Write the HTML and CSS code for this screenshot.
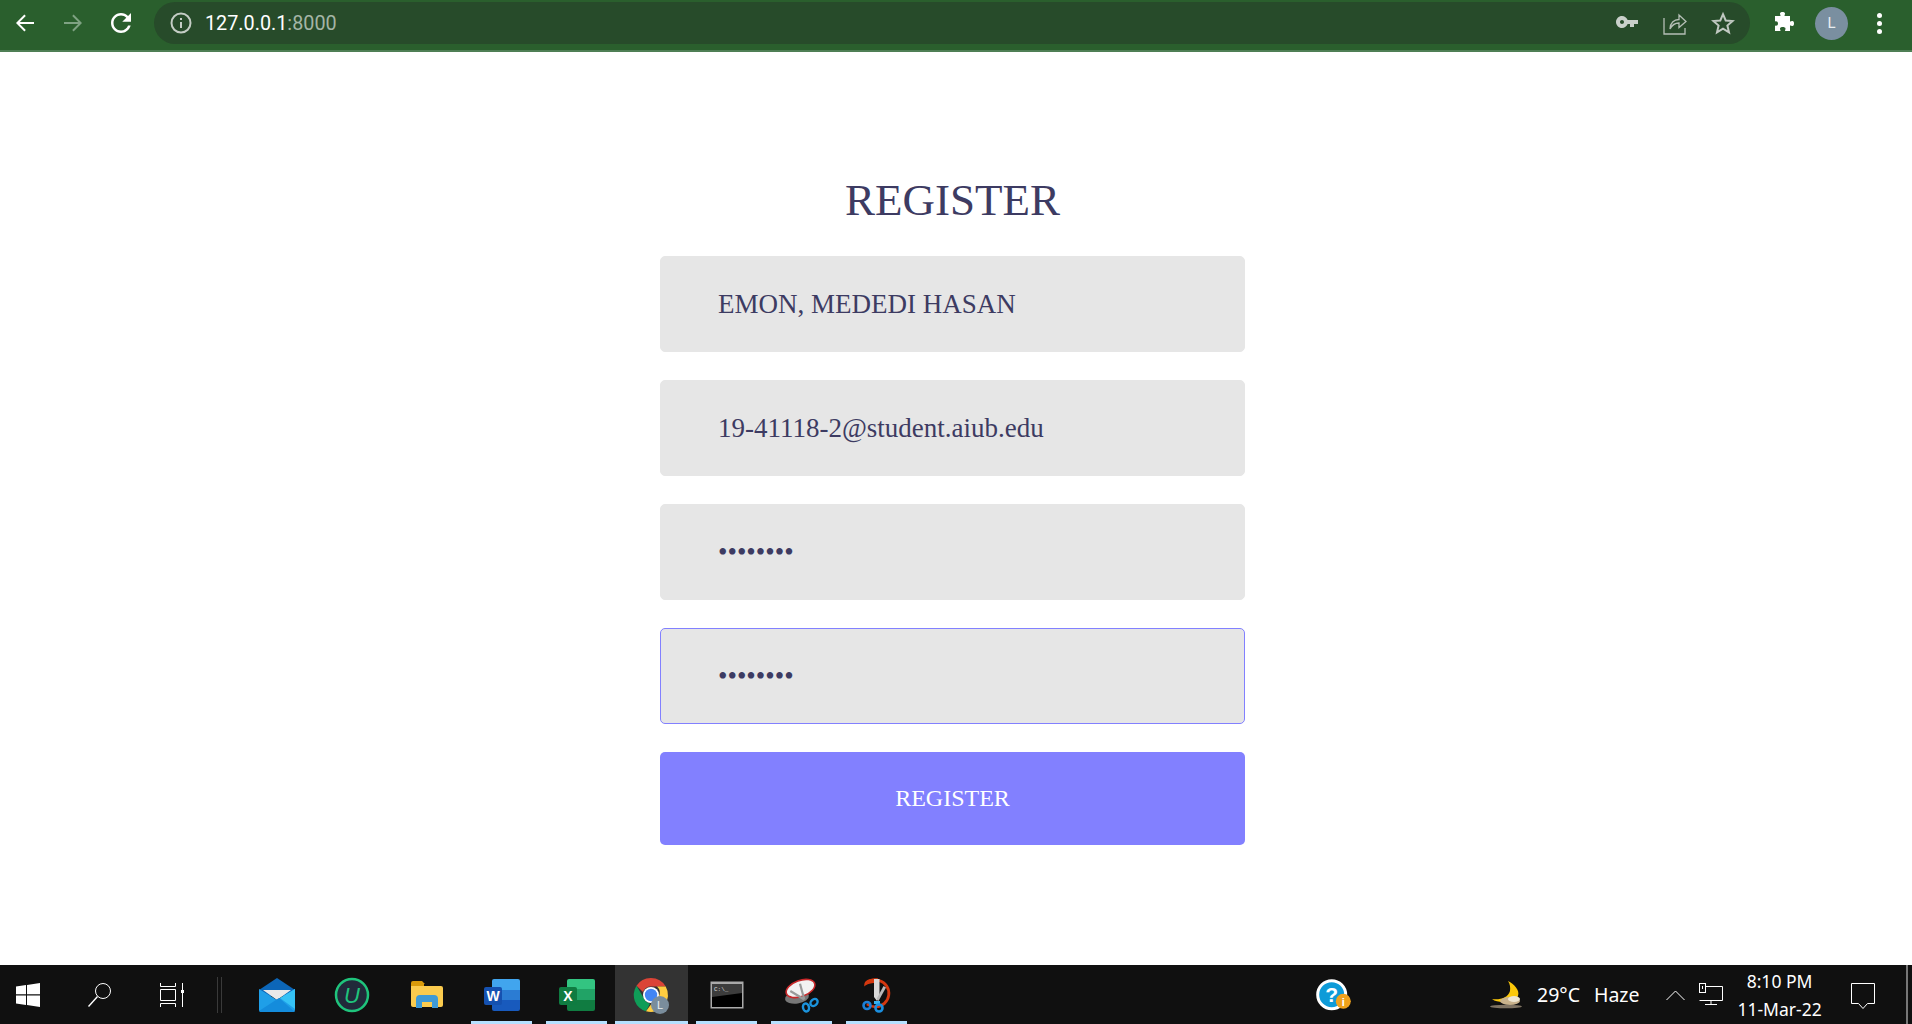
FILE: index.html
```html
<!DOCTYPE html>
<html lang="en">
<head>
  <meta charset="UTF-8">
  <title>Register</title>
  <link rel="stylesheet" href="styles.css">
</head>
<body>
  <header class="toolbar">
    <svg class="nav-icon" viewBox="0 0 24 24"><path d="M21 11H6.800l6-6L11.400 3.600 3 12l8.400 8.400 1.400-1.400-6-6H21z"/></svg>
    <svg class="nav-icon dim" viewBox="0 0 24 24"><path d="M3 11h14.200l-6-6 1.400-1.400L21 12l-8.400 8.400-1.400-1.400 6-6H3z"/></svg>
    <svg class="nav-icon reload" viewBox="0 0 24 24"><path d="M17.650 6.350C16.200 4.900 14.210 4 12 4c-4.420 0-7.990 3.580-7.990 8s3.570 8 7.990 8c3.730 0 6.840-2.550 7.730-6h-2.080c-.82 2.330-3.040 4-5.650 4-3.310 0-6-2.690-6-6s2.690-6 6-6c1.660 0 3.140.69 4.220 1.780L13 11h7V4l-2.350 2.350z"/></svg>
    <div class="omnibox">
      <svg class="info" viewBox="0 0 22 22"><circle cx="11" cy="11" r="9.500"/><path d="M11 10v6M11 6v2"/></svg>
      <span class="url">127.0.0.1<span class="port">:8000</span></span>
      <div class="omni-actions">
        <svg class="key" viewBox="0 0 24 24"><path d="M12.650 10C11.830 7.670 9.610 6 7 6c-3.310 0-6 2.690-6 6s2.690 6 6 6c2.610 0 4.830-1.670 5.650-4H15v3h4v-3h4v-4H12.650zM7 14c-1.100 0-2-.9-2-2s.9-2 2-2 2 .9 2 2-.9 2-2 2z"/></svg>
        <svg class="share" viewBox="0 0 24 24"><path d="M1 7v16h21v-6M7 18c0-6 4-9.500 9-9.500V4l7 6.500-7 6V12c-4 0-7 2-9 6z"/></svg>
        <svg class="star" viewBox="0 0 24 24"><path d="M12 3.200l2.700 6.300 6.900.6-5.200 4.500 1.600 6.700-6-3.600-6 3.600 1.600-6.700-5.200-4.500 6.900-.6z"/></svg>
      </div>
    </div>
    <svg class="puzzle" viewBox="0 0 24 24"><path d="M9 2.500c0-2 5-2 5 0 0 1-.5 1.500-.5 2.500H19v5.500c1 0 1.500-.5 2.500-.5 2 0 2 5 0 5-1 0-1.500-.5-2.500-.5V20h-5c0-1 .5-1.500.5-2.500 0-2-5.500-2-5.500 0 0 1 .5 1.500.5 2.500H4v-5.500c1.500.5 3 0 3-2s-1.500-2.500-3-2V5h5.500c0-1-.5-1.500-.5-2.500z"/></svg>
    <div class="avatar">L</div>
    <div class="menu-dots"><i></i><i></i><i></i></div>
  </header>

  <main class="page">
    <form class="register">
      <h1>REGISTER</h1>
      <input class="field" type="text" value="EMON, MEDEDI HASAN">
      <input class="field" type="text" value="19-41118-2@student.aiub.edu">
      <input class="field" type="password" value="12345678">
      <input class="field focused" type="password" value="12345678">
      <button class="submit" type="button">REGISTER</button>
    </form>
  </main>

  <footer class="taskbar">
    <div class="sys-btn">
      <svg class="w24" viewBox="0 0 24 24"><path fill="#fff" d="M0 3.400 10 2v9.300H0zM11 1.900 24 0v11.300H11zM0 12.500h10V22L0 20.600zM11 12.500h13V24l-13-1.900z"/></svg>
    </div>
    <div class="sys-btn">
      <svg class="w24" viewBox="0 0 24 24" fill="none" stroke="#fff" stroke-width="1"><circle cx="15" cy="8" r="7.500"/><path d="M9.500 13.500.5 23.500" stroke-width="1.400"/></svg>
    </div>
    <div class="sys-btn">
      <svg class="w24" viewBox="0 0 24 24" fill="none" stroke="#fff" stroke-width="1"><path d="M.5 0v3.500h15V0M.5 6.500h15v11H.5zM.5 24v-3.500h15V24M22.500 0v24"/><rect x="21" y="7" width="3" height="3" fill="#fff" stroke="none"/></svg>
    </div>
    <div class="divider"></div>

    <div class="app">
      <svg width="36" height="34" viewBox="0 0 36 34"><path fill="#0c66b8" d="M0 12 18 0l18 12v6H0z"/><path fill="#e9e9e9" d="M4 12h28L18 22z"/><path fill="#1f9fe8" d="M0 11l18 11 18-11v21a2 2 0 0 1-2 2H2a2 2 0 0 1-2-2z"/><path fill="#35c2f5" d="M36 11v20L21 20z"/><path fill="#148cdc" d="M0 33l20-13 16 14H2z"/></svg>
    </div>
    <div class="app">
      <svg width="36" height="36" viewBox="0 0 36 36"><circle cx="18" cy="18" r="16" fill="#212a3a" stroke="#1fc47c" stroke-width="2.500"/><text x="18" y="26" class="u-mark">U</text></svg>
    </div>
    <div class="app">
      <svg width="32" height="27" viewBox="0 0 32 27"><path fill="#d99a0b" d="M0 2a2 2 0 0 1 2-2h9l3 3h-1v4H0z"/><path fill="#fbcb4e" d="M0 5h30a2 2 0 0 1 2 2v17a2 2 0 0 1-2 2H2a2 2 0 0 1-2-2z"/><path fill="#3f9ad6" d="M5 27V18a4 4 0 0 1 4-4h14a4 4 0 0 1 4 4v9h-6v-6h-10v6z"/></svg>
    </div>
    <div class="app running">
      <svg width="36" height="32" viewBox="0 0 36 32"><path fill="#41a5ee" d="M8 2a2 2 0 0 1 2-2h24a2 2 0 0 1 2 2v10H8z"/><path fill="#2b7cd3" d="M8 11h28v11H8z"/><path fill="#185abd" d="M8 21h28v9a2 2 0 0 1-2 2H10a2 2 0 0 1-2-2z"/><rect x="0" y="8" width="18" height="18" rx="2" fill="#1551b0"/><text x="9" y="22" class="doc-mark">W</text></svg>
    </div>
    <div class="app running">
      <svg width="36" height="32" viewBox="0 0 36 32"><path fill="#33c481" d="M8 2a2 2 0 0 1 2-2h24a2 2 0 0 1 2 2v9H8z"/><path fill="#21a366" d="M8 10h28v11H8z"/><path fill="#107c41" d="M8 21h28v9a2 2 0 0 1-2 2H10a2 2 0 0 1-2-2z"/><rect x="0" y="8" width="18" height="18" rx="2" fill="#0f7b41"/><text x="9" y="22" class="doc-mark">X</text></svg>
    </div>
    <div class="app running active">
      <svg width="40" height="40" viewBox="0 0 40 40">
        <path fill="#db4437" d="M18 1a17 17 0 0 1 14.700 8.500H18a8.500 8.500 0 0 0-8 5.500L3.500 8.700A17 17 0 0 1 18 1z"/>
        <path fill="#0f9d58" d="M3.500 8.700 11 21.500a8 8 0 0 0 6 5L13 34.300A17 17 0 0 1 3.500 8.700z"/>
        <path fill="#ffcd40" d="M32.700 9.500a17 17 0 0 1-19.700 24.800l8-11a8 8 0 0 0 3-13.800z"/>
        <circle cx="18" cy="18" r="8" fill="#fff"/><circle cx="18" cy="18" r="6.200" fill="#4285f4"/>
        <circle cx="27" cy="28" r="9" fill="#7a8d9c"/><text x="27" y="32" class="badge-mark">L</text>
      </svg>
    </div>
    <div class="app running">
      <svg width="34" height="28" viewBox="0 0 34 28"><rect x=".5" y=".5" width="33" height="27" fill="#aaa"/><rect x="2" y="3" width="30" height="23" fill="#000"/><path d="M2 3h30v9L2 16z" fill="#3c3c3c"/><text x="4" y="10" class="cmd-mark">C:\_</text></svg>
    </div>
    <div class="app running">
      <svg width="36" height="36" viewBox="0 0 36 36" fill="none">
        <ellipse cx="13" cy="20.500" rx="12" ry="6" fill="#777" transform="rotate(-8 13 20.500)"/>
        <ellipse cx="16.500" cy="11.500" rx="15" ry="8" fill="#f2f2f2" stroke="#c8282a" stroke-width="1.600" transform="rotate(-20 16.500 11.500)"/>
        <path d="M16 6.700 20.300 22.500M6.300 14 20.300 22.500" stroke="#9a9a9a" stroke-width="2.200"/>
        <ellipse cx="22" cy="30.500" rx="3" ry="4" stroke="#1b93dc" stroke-width="2.400" transform="rotate(-15 22 30.500)"/>
        <ellipse cx="30" cy="25.500" rx="3" ry="4" stroke="#1b93dc" stroke-width="2.400" transform="rotate(50 30 25.500)"/>
      </svg>
    </div>
    <div class="app running">
      <svg width="36" height="36" viewBox="0 0 36 36" fill="none">
        <path d="M11 4a13.500 13.500 0 1 1-3 23" stroke="#d5380f" stroke-width="2.800"/>
        <path d="M6 8c0-4 4-6 12-6v3c-6 0-9 1-12 3z" fill="#d5380f" stroke="#d5380f" stroke-width="1.500"/>
        <path d="M15 2h5.500v18l-2.500 4-3-4z" fill="#d8d8d8"/>
        <path d="M27 10.500 19.500 24l-2-2 7-13z" fill="#b9b9b9"/>
        <path d="M15 24h6v3h-6z" fill="#35b2f0"/>
        <circle cx="8" cy="28.500" r="3.500" stroke="#1b7fd6" stroke-width="2.600"/>
        <circle cx="20" cy="31" r="3.500" stroke="#1b8fe0" stroke-width="2.600"/>
      </svg>
    </div>

    <div class="help">
      <svg width="35" height="32" viewBox="0 0 35 32"><circle cx="15.700" cy="15.700" r="14" fill="#0e9bd8" stroke="#fff" stroke-width="3"/><text x="15.700" y="23" class="help-mark">?</text><circle cx="27.300" cy="22.300" r="7.500" fill="#f0a21c"/><text x="27.300" y="26.500" class="help-info">i</text></svg>
    </div>
    <div class="weather">
      <svg width="35" height="28" viewBox="0 0 35 28"><path fill="#fcc80a" d="M18 0c6 3 12 9 10 15-2 5-18 9-26 3 8 1 16-1 18-8 .5-4 0-7-2-10z"/><ellipse cx="20" cy="20" rx="10" ry="4" fill="#c9b28c"/><ellipse cx="24" cy="18" rx="6" ry="3" fill="#efe6d2"/><ellipse cx="16" cy="25.500" rx="16" ry="1.800" fill="#7f7363"/></svg>
      <span class="temp">29°C</span>
      <span class="cond">Haze</span>
    </div>
    <svg class="caret" width="19" height="10" viewBox="0 0 19 10" fill="none" stroke="#fff"><path d="M.5 10 9.500 1l9 9"/></svg>
    <svg class="net" width="24" height="24" viewBox="0 0 24 24" fill="none" stroke="#fff"><path d="M6 3.500h17.500v14H.5"/><rect x=".5" y=".5" width="6" height="9"/><path d="M3.500 3v3M12 17.500v4M6 21.500h12"/></svg>
    <div class="clock"><span>8:10 PM</span><span>11-Mar-22</span></div>
    <svg class="notif" width="24" height="30" viewBox="0 0 24 30" fill="none" stroke="#fff"><path d="M.5.5h23v20h-7l-4.500 5-4.500-5h-7z"/></svg>
    <div class="show-desktop"></div>
  </footer>
</body>
</html>
```

FILE: styles.css
```css
* { box-sizing: border-box; }
html, body { height: 100%; }
body { margin: 0; display: flex; flex-direction: column; height: 1024px; overflow: hidden; background: #fff; font-family: "Liberation Serif", serif; }

/* browser bar */
.toolbar { height: 52px; flex: none; display: flex; align-items: flex-start; background: #2a5f2d; border-bottom: 2px solid #4f7f55; padding-left: 13px; }
.nav-icon { width: 24px; height: 24px; margin: 11px 24px 0 0; fill: #fff; }
.nav-icon.dim { fill: #7fa283; }
.nav-icon.reload { width: 30px; height: 30px; margin: 8px 21px 0 -3px; }
.omnibox { width: 1596px; height: 42px; margin: 2px 0 0 -3px; padding: 0 15px 0 16px; display: flex; align-items: center; background: #274b2a; border-radius: 21px; }
.info { width: 22px; height: 22px; fill: none; stroke: #c4cdc5; stroke-width: 2; flex: none; }
.url { margin-left: 13px; font: 19.800px Roboto, sans-serif; color: #fff; }
.port { color: #a4b5a6; }
.omni-actions { margin-left: auto; display: flex; align-items: center; gap: 24px; }
.omni-actions svg { width: 24px; height: 24px; }
.key { fill: #c9d0ca; margin-top: -2px; }
.share { fill: none; stroke: #b5bfb6; stroke-width: 1.300; }
.star { fill: none; stroke: #c0c8c1; stroke-width: 2; }
.puzzle { width: 24px; height: 24px; margin: 11px 0 0 21px; fill: #fff; }
.avatar { width: 33px; height: 33px; margin: 7px 0 0 20px; border-radius: 50%; background: #7a8fa0; color: #e8edf0; font: 15px/33px Roboto, sans-serif; text-align: center; }
.menu-dots { margin: 13px 0 0 29px; width: 5px; display: flex; flex-direction: column; gap: 3px; }
.menu-dots i { width: 5px; height: 5px; border-radius: 50%; background: #fff; }

/* form */
.page { flex: 1; padding: 0 7px 0 0; display: flex; justify-content: center; }
.register { width: 585px; display: flex; flex-direction: column; }
.register h1 { margin: 118px 0 26px; font-size: 45px; font-weight: 400; line-height: 60px; text-align: center; color: #3d3b62; }
.field { width: 100%; height: 96px; margin-bottom: 28px; padding: 0 57px; border: 1px solid #e6e6e6; border-radius: 5px; background: #e6e6e6; color: #3d3b62; font: 27px "Liberation Serif", serif; outline: none; }
.field.focused { border-color: #8280ff; }
.submit { width: 100%; height: 93px; border: 0; border-radius: 5px; background: #8280ff; color: #fff; font: 24px "Liberation Serif", serif; }

/* windows taskbar */
.taskbar { height: 59px; flex: none; display: flex; align-items: center; background: #101010; font-family: "Noto Sans", sans-serif; color: #fff; }
.sys-btn { width: 56px; margin-right: 16px; display: flex; justify-content: center; }
.w24 { width: 24px; height: 24px; display: block; }
.divider { width: 5px; height: 36px; margin: 0 17px 0 1px; border-left: 1px solid #3a3a3a; border-right: 1px solid #3a3a3a; }
.app { width: 75px; height: 59px; display: flex; align-items: center; justify-content: center; position: relative; }
.app.running::after { content: ""; position: absolute; left: 7px; right: 7px; bottom: 0; height: 3px; background: #b5e0ff; }
.app.active { background: #333; margin: 0 1px; width: 73px; }
.app.active::after { left: 0; right: 0; }
.app.active svg { margin-left: 3px; margin-top: 5px; }
.u-mark { font: italic 22px "Liberation Sans", sans-serif; fill: #1fc47c; text-anchor: middle; }
.doc-mark { font: 700 14px "Liberation Sans", sans-serif; fill: #fff; text-anchor: middle; }
.badge-mark { font: 11px Roboto, sans-serif; fill: #e8edf0; text-anchor: middle; }
.cmd-mark { font: 6px "Liberation Mono", monospace; fill: #ddd; }
.help-mark { font: 700 21px "Liberation Sans", sans-serif; fill: #fff; text-anchor: middle; }
.help-info { font: 700 11px "Liberation Sans", sans-serif; fill: #fff; text-anchor: middle; }
.help { margin-left: 402px; height: 32px; }
.weather { margin-left: 139px; display: flex; align-items: center; font-size: 19.500px; }
.temp { margin-left: 12px; }
.cond { margin-left: 14px; }
.caret { margin-left: 26px; }
.net { margin-left: 14px; }
.clock { width: 108px; margin-left: 3px; display: flex; flex-direction: column; align-items: center; gap: 6px; font-size: 17.500px; line-height: 22px; }
.notif { margin-left: 17px; margin-top: 6px; }
.show-desktop { width: 2px; height: 59px; margin-left: 31px; background: #777; }
```
